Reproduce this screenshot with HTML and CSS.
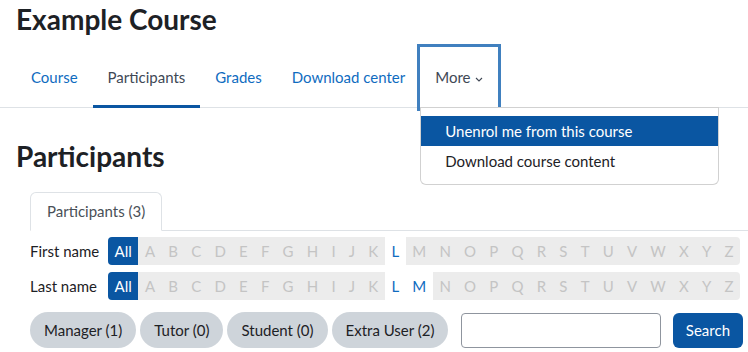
FILE: index.html
```html
<!DOCTYPE html>
<html lang="en">
<head>
    <meta charset="UTF-8">
    <meta name="viewport" content="width=device-width, initial-scale=1.0">
    <title>Participants: Example Course</title>
    <link rel="stylesheet" href="styles.css">
</head>
<body>

<div class="page-header">
    <h1>Example Course</h1>
</div>

<nav class="secondary-nav">
    <ul class="nav-main">
        <li><a href="#" class="nav-link">Course</a></li>
        <li><a href="#" class="nav-link active">Participants</a></li>
        <li><a href="#" class="nav-link">Grades</a></li>
        <li><a href="#" class="nav-link">Download center</a></li>
        <li class="dropdown">
            <a href="#" class="nav-link more">More<svg class="chevron" width="8" height="5" viewBox="0 0 8 5"><path d="M1 1 L4 4 L7 1" fill="none" stroke="currentColor" stroke-width="1.1"/></svg></a>
            <div class="dropdown-menu">
                <a href="#" class="dropdown-item selected">Unenrol me from this course</a>
                <a href="#" class="dropdown-item">Download course content</a>
            </div>
        </li>
    </ul>
</nav>

<div class="main">
    <h2>Participants</h2>

    <ul class="tabs">
        <li><a href="#" class="tab active">Participants (3)</a></li>
    </ul>

    <div class="initials">
        <div class="initials-row">
            <span class="initials-label">First name</span>
            <ul class="pagination">
                <li class="page-item active"><a href="#">All</a></li>
                <li class="page-item disabled"><span>A</span></li>
                <li class="page-item disabled"><span>B</span></li>
                <li class="page-item disabled"><span>C</span></li>
                <li class="page-item disabled"><span>D</span></li>
                <li class="page-item disabled"><span>E</span></li>
                <li class="page-item disabled"><span>F</span></li>
                <li class="page-item disabled"><span>G</span></li>
                <li class="page-item disabled"><span>H</span></li>
                <li class="page-item disabled"><span>I</span></li>
                <li class="page-item disabled"><span>J</span></li>
                <li class="page-item disabled"><span>K</span></li>
                <li class="page-item"><a href="#">L</a></li>
                <li class="page-item disabled"><span>M</span></li>
                <li class="page-item disabled"><span>N</span></li>
                <li class="page-item disabled"><span>O</span></li>
                <li class="page-item disabled"><span>P</span></li>
                <li class="page-item disabled"><span>Q</span></li>
                <li class="page-item disabled"><span>R</span></li>
                <li class="page-item disabled"><span>S</span></li>
                <li class="page-item disabled"><span>T</span></li>
                <li class="page-item disabled"><span>U</span></li>
                <li class="page-item disabled"><span>V</span></li>
                <li class="page-item disabled"><span>W</span></li>
                <li class="page-item disabled"><span>X</span></li>
                <li class="page-item disabled"><span>Y</span></li>
                <li class="page-item disabled"><span>Z</span></li>
            </ul>
        </div>
        <div class="initials-row">
            <span class="initials-label">Last name</span>
            <ul class="pagination">
                <li class="page-item active"><a href="#">All</a></li>
                <li class="page-item disabled"><span>A</span></li>
                <li class="page-item disabled"><span>B</span></li>
                <li class="page-item disabled"><span>C</span></li>
                <li class="page-item disabled"><span>D</span></li>
                <li class="page-item disabled"><span>E</span></li>
                <li class="page-item disabled"><span>F</span></li>
                <li class="page-item disabled"><span>G</span></li>
                <li class="page-item disabled"><span>H</span></li>
                <li class="page-item disabled"><span>I</span></li>
                <li class="page-item disabled"><span>J</span></li>
                <li class="page-item disabled"><span>K</span></li>
                <li class="page-item"><a href="#">L</a></li>
                <li class="page-item"><a href="#">M</a></li>
                <li class="page-item disabled"><span>N</span></li>
                <li class="page-item disabled"><span>O</span></li>
                <li class="page-item disabled"><span>P</span></li>
                <li class="page-item disabled"><span>Q</span></li>
                <li class="page-item disabled"><span>R</span></li>
                <li class="page-item disabled"><span>S</span></li>
                <li class="page-item disabled"><span>T</span></li>
                <li class="page-item disabled"><span>U</span></li>
                <li class="page-item disabled"><span>V</span></li>
                <li class="page-item disabled"><span>W</span></li>
                <li class="page-item disabled"><span>X</span></li>
                <li class="page-item disabled"><span>Y</span></li>
                <li class="page-item disabled"><span>Z</span></li>
            </ul>
        </div>
    </div>

    <div class="filter-row">
        <div class="roles">
            <button type="button" class="role-pill">Manager (1)</button>
            <button type="button" class="role-pill">Tutor (0)</button>
            <button type="button" class="role-pill">Student (0)</button>
            <button type="button" class="role-pill">Extra User (2)</button>
        </div>
        <form class="search-form">
            <input type="text" class="search-input">
            <button type="submit" class="btn-primary">Search</button>
        </form>
    </div>
</div>

</body>
</html>
```

FILE: styles.css
```css
/* Base */
body {
    margin: 0;
    font-family: Lato, "Liberation Sans", sans-serif;
    font-size: 15px;
    color: #1d2125;
    background: #fff;
}

a {
    text-decoration: none;
}

/* Page header */
.page-header {
    padding: 3px 16px 0;
}

h1 {
    margin: 0;
    font-size: 28px;
    font-weight: 700;
    line-height: 33px;
}

/* Secondary navigation */
.nav-main {
    display: flex;
    list-style: none;
    margin: 11px 0 0;
    padding: 0 0 0 16px;
    border-bottom: 1px solid #dee2e6;
}

.nav-link {
    display: block;
    padding: 2px 15px 0;
    line-height: 56px;
    margin-bottom: -1px;
    color: #0f6cbf;
    border-bottom: 3px solid transparent;
}

.nav-link.active {
    color: #404855;
    border-bottom-color: #0a56a2;
}

.nav-link.more {
    color: #404855;
    outline: 3px solid #4080bf;
}

.chevron {
    margin-left: 4px;
    vertical-align: middle;
}

.dropdown {
    position: relative;
}

.dropdown-menu {
    position: absolute;
    top: 100%;
    left: 0;
    z-index: 10;
    width: 299px;
    box-sizing: border-box;
    padding: 8px 0;
    background: #fff;
    border: 1px solid rgba(0, 0, 0, 0.18);
    border-radius: 0 0 6px 6px;
}

.dropdown-item {
    display: block;
    padding: 0 24px;
    line-height: 30px;
    color: #1d2125;
    white-space: nowrap;
}

.dropdown-item.selected {
    background-color: #0a56a2;
    color: #fff;
}

/* Main area */
h2 {
    margin: 31px 0 0 16px;
    font-size: 28px;
    font-weight: 700;
    line-height: 34px;
}

.tabs {
    display: flex;
    list-style: none;
    margin: 19px 0 0 30px;
    padding: 0;
    border-bottom: 1px solid #dee2e6;
}

.tab {
    display: block;
    padding: 0 16px;
    line-height: 37px;
    margin-bottom: -1px;
    color: #495057;
    border: 1px solid #dee2e6;
    border-bottom-color: #fff;
    border-radius: 6px 6px 0 0;
}

/* Initials bars */
.initials {
    display: flex;
    flex-direction: column;
    gap: 7px;
    margin: 6px 0 0 30px;
}

.initials-row {
    display: flex;
    align-items: center;
}

.initials-label {
    flex: 0 0 78px;
    white-space: nowrap;
}

.pagination {
    display: flex;
    list-style: none;
    margin: 0;
    padding: 0;
}

.page-item a,
.page-item span {
    display: block;
    padding: 0 6.6px;
    line-height: 28px;
    color: #0f6cbf;
}

.page-item.active a {
    background-color: #0a56a2;
    color: #fff;
    border-radius: 4px 0 0 4px;
}

.page-item.disabled span {
    background-color: #ececec;
    color: #c4c4c4;
}

.page-item:last-child span {
    border-radius: 0 4px 4px 0;
}

/* Roles and search */
.filter-row {
    display: flex;
    align-items: center;
    margin: 12px 5px 0 30px;
}

.roles {
    display: flex;
    gap: 4px;
}

.role-pill {
    height: 36px;
    padding: 0 14px;
    font-family: inherit;
    font-size: 15px;
    color: #1d2125;
    background-color: #ced4da;
    border: none;
    border-radius: 18px;
    white-space: nowrap;
}

.search-form {
    display: flex;
    gap: 12px;
    margin-left: auto;
}

.search-input {
    width: 200px;
    height: 35px;
    box-sizing: border-box;
    border: 1px solid #8f959e;
    border-radius: 4px;
}

.btn-primary {
    height: 35px;
    padding: 0 13px;
    font-family: inherit;
    font-size: 15px;
    color: #fff;
    background-color: #0a56a2;
    border: none;
    border-radius: 6px;
}
```
